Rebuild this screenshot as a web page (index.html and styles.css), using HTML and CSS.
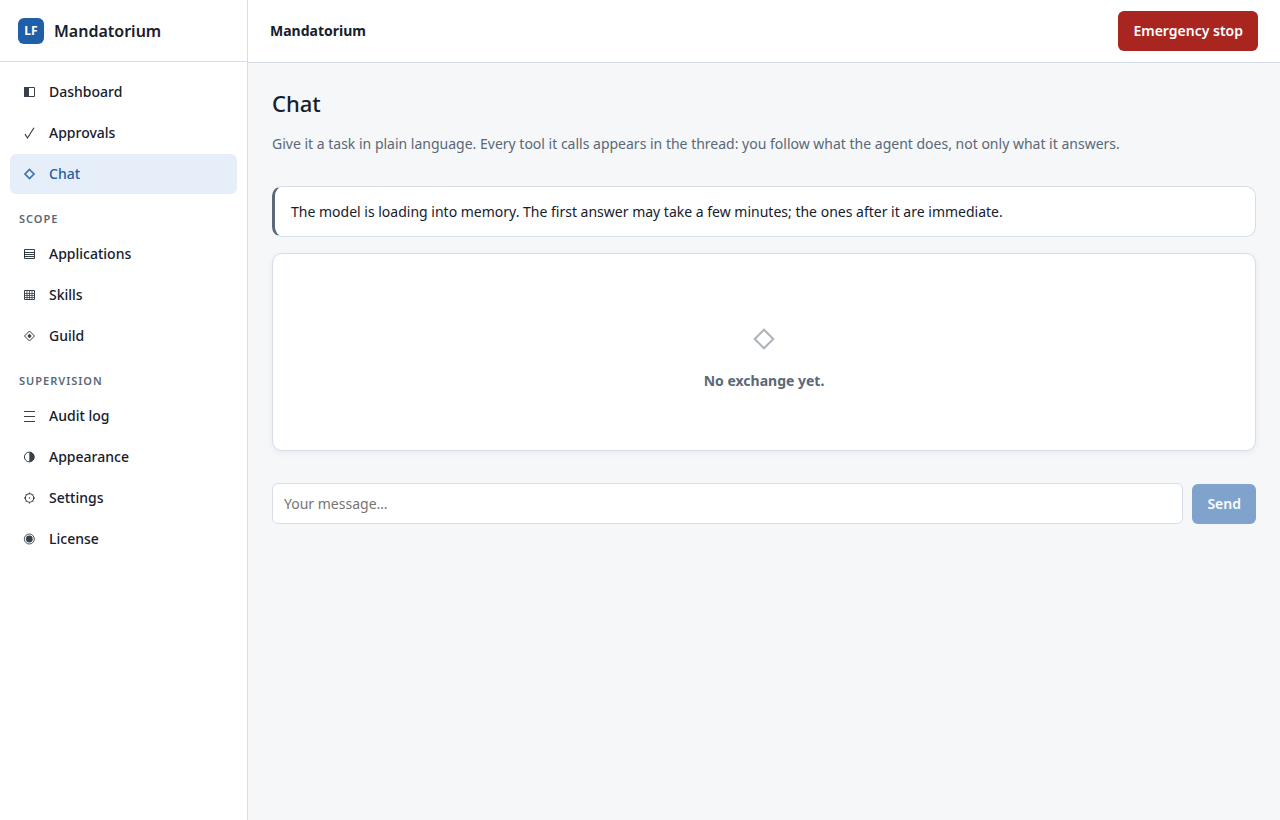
FILE: index.html
```html
<!DOCTYPE html>
<html lang="en">
<head>
<meta charset="utf-8">
<meta name="viewport" content="width=device-width, initial-scale=1">
<title>Mandatorium – Chat</title>
<link rel="stylesheet" href="styles.css">
</head>
<body>
<div class="app">
  <aside class="sidebar">
    <div class="brand">
      <span class="brand-mark">LF</span>
      <span class="brand-name">Mandatorium</span>
    </div>
    <nav class="nav" aria-label="Main">
      <a class="nav-item" href="#dashboard">
        <svg class="icon" viewBox="0 0 12 12" aria-hidden="true"><path d="M1.500 1.500h10v9h-10z" fill="none" stroke="currentColor"/><path d="M1 1h5v10H1z" fill="currentColor"/></svg>
        Dashboard
      </a>
      <a class="nav-item" href="#approvals">
        <svg class="icon" viewBox="0 0 12 12" aria-hidden="true"><path d="M2 7.200l2.500 3.800L11 .7" fill="none" stroke="currentColor" stroke-width="1.200"/></svg>
        Approvals
      </a>
      <a class="nav-item active" href="#chat" aria-current="page">
        <svg class="icon" viewBox="0 0 12 12" aria-hidden="true"><path d="M6.500 1.500L11 6l-4.500 4.500L2 6z" fill="none" stroke="currentColor" stroke-width="1.700"/></svg>
        Chat
      </a>
      <h2 class="nav-label">Scope</h2>
      <a class="nav-item" href="#applications">
        <svg class="icon" viewBox="0 0 12 12" aria-hidden="true"><path d="M1.500 1.500h10v9h-10zM1 4.500h10M1 6.500h10M1 8.500h10" fill="none" stroke="currentColor"/></svg>
        Applications
      </a>
      <a class="nav-item" href="#skills">
        <svg class="icon" viewBox="0 0 12 12" aria-hidden="true"><path d="M1.500 1.500h10v9h-10z" fill="none" stroke="currentColor"/><path d="M1 4.500h10M1 6.500h10M1 8.500h10M4 1v10M6.500 1v10M9 1v10" fill="none" stroke="currentColor" stroke-width=".8"/></svg>
        Skills
      </a>
      <a class="nav-item" href="#guild">
        <svg class="icon" viewBox="0 0 12 12" aria-hidden="true"><path d="M6.500 1L11.500 6l-5 5L1.500 6z" fill="none" stroke="currentColor"/><path d="M6.500 3.800L8.700 6 6.500 8.200 4.300 6z" fill="currentColor"/></svg>
        Guild
      </a>
      <h2 class="nav-label">Supervision</h2>
      <a class="nav-item" href="#audit">
        <svg class="icon" viewBox="0 0 12 12" aria-hidden="true"><path d="M1 1.500h11M1 6.500h11M1 11.500h11" fill="none" stroke="currentColor"/></svg>
        Audit log
      </a>
      <a class="nav-item" href="#appearance">
        <svg class="icon" viewBox="0 0 12 12" aria-hidden="true"><circle cx="6.300" cy="6" r="4.900" fill="none" stroke="currentColor"/><path d="M6.300 1a5 5 0 0 1 0 10z" fill="currentColor"/></svg>
        Appearance
      </a>
      <a class="nav-item" href="#settings">
        <svg class="icon" viewBox="0 0 12 12" aria-hidden="true"><circle cx="6.500" cy="6" r="4.200" fill="none" stroke="currentColor" stroke-width="1.100"/><circle cx="6.500" cy="6" r=".7" fill="currentColor"/><path d="M6.500 2V.5M6.500 10v1.500M2.500 6H1M10.500 6H12M3.700 3.200l-1-1M9.300 3.200l1-1M3.700 8.800l-1 1M9.300 8.800l1 1" stroke="currentColor"/></svg>
        Settings
      </a>
      <a class="nav-item" href="#license">
        <svg class="icon" viewBox="0 0 12 12" aria-hidden="true"><circle cx="6.300" cy="6" r="5" fill="none" stroke="currentColor" stroke-width=".9"/><circle cx="6.300" cy="6" r="3.400" fill="currentColor"/></svg>
        License
      </a>
    </nav>
  </aside>
  <div class="main">
    <header class="topbar">
      <span class="topbar-title">Mandatorium</span>
      <button class="btn btn-danger" type="button">Emergency stop</button>
    </header>
    <main class="content">
      <h1 class="title">Chat</h1>
      <p class="subtitle">Give it a task in plain language. Every tool it calls appears in the thread: you follow what the agent does, not only what it answers.</p>
      <div class="notice" role="status">The model is loading into memory. The first answer may take a few minutes; the ones after it are immediate.</div>
      <section class="thread">
        <svg class="thread-icon" viewBox="0 0 24 24" aria-hidden="true"><path d="M12 2.700L21.300 12 12 21.300 2.700 12z" fill="none" stroke="currentColor" stroke-width="2"/></svg>
        <p class="thread-text">No exchange yet.</p>
      </section>
      <form class="composer">
        <input class="message" type="text" placeholder="Your message…" aria-label="Your message">
        <button class="btn btn-primary" type="submit" disabled>Send</button>
      </form>
    </main>
  </div>
</div>
</body>
</html>
```

FILE: styles.css
```css
* {
  box-sizing: border-box;
}

body {
  margin: 0;
  background: #f5f7f9;
  color: #16202c;
  font-family: "Segoe UI", "Noto Sans", sans-serif;
  font-size: 14px;
  line-height: 24px;
}

.app {
  display: flex;
  min-height: 100vh;
}

.sidebar {
  flex: 0 0 248px;
  background: #fff;
  border-right: 1px solid #d6dde8;
}

.brand {
  display: flex;
  align-items: center;
  gap: 10px;
  padding: 18px;
  height: 62px;
  border-bottom: 1px solid #d6dde8;
}

.brand-mark {
  display: grid;
  place-items: center;
  width: 26px;
  height: 26px;
  border-radius: 6px;
  background: #1f5fa8;
  color: #fff;
  font-size: 12px;
  font-weight: 700;
}

.brand-name {
  font-size: 16px;
  font-weight: 600;
}

.nav {
  display: flex;
  flex-direction: column;
  gap: 1px;
  padding: 10px;
}

.nav-item {
  display: flex;
  align-items: center;
  gap: 14px;
  padding: 8px 13px;
  border-radius: 6px;
  color: inherit;
  font-weight: 500;
  text-decoration: none;
}

.nav-item.active {
  background: #e5eef9;
  color: #1f5fa8;
}

.icon {
  width: 12px;
  height: 12px;
  overflow: visible;
  opacity: 0.85;
}

.nav-label {
  margin: 0;
  padding: 15px 9px 5px;
  color: #5a6878;
  font-size: 11px;
  font-weight: 600;
  letter-spacing: 1px;
  line-height: 18px;
  text-transform: uppercase;
}

.main {
  flex: 1;
  min-width: 0;
}

.topbar {
  display: flex;
  align-items: center;
  justify-content: space-between;
  padding: 11px 22px;
  background: #fff;
  border-bottom: 1px solid #d6dde8;
}

.topbar-title {
  font-weight: 700;
}

.btn {
  padding: 8px 15px;
  border: 0;
  border-radius: 6px;
  color: #fff;
  font: inherit;
  font-weight: 600;
}

.btn-danger {
  background: #a92520;
}

.btn-primary {
  background: #1f5fa8;
}

.btn:disabled {
  opacity: 0.55;
}

.content {
  padding: 24px;
}

.title {
  margin: 0;
  font-size: 22px;
  font-weight: 500;
  line-height: 32px;
}

.subtitle {
  margin: 13px 0 30px;
  color: #5a6878;
}

.notice {
  padding: 13px 16px 12px;
  background: #fff;
  border: 1px solid #d6dde8;
  border-left: 3px solid #5a6878;
  border-radius: 10px;
}

.thread {
  display: flex;
  flex-direction: column;
  align-items: center;
  gap: 18px;
  margin: 16px 0 32px;
  padding: 73px 24px 57px;
  background: #fff;
  border: 1px solid #d6dde8;
  border-radius: 10px;
  box-shadow: 0 2px 6px rgba(22, 32, 44, 0.06);
  color: #5a6878;
}

.thread-icon {
  width: 24px;
  height: 24px;
  opacity: 0.5;
}

.thread-text {
  margin: 0;
  font-weight: 700;
}

.composer {
  display: flex;
  align-items: flex-end;
  gap: 9px;
}

.message {
  flex: 1;
  min-width: 0;
  height: 41px;
  padding: 0 11px;
  background: #fff;
  border: 1px solid #d6dde8;
  border-radius: 6px;
  color: inherit;
  font: inherit;
}

.message::placeholder {
  color: #757575;
}
```
